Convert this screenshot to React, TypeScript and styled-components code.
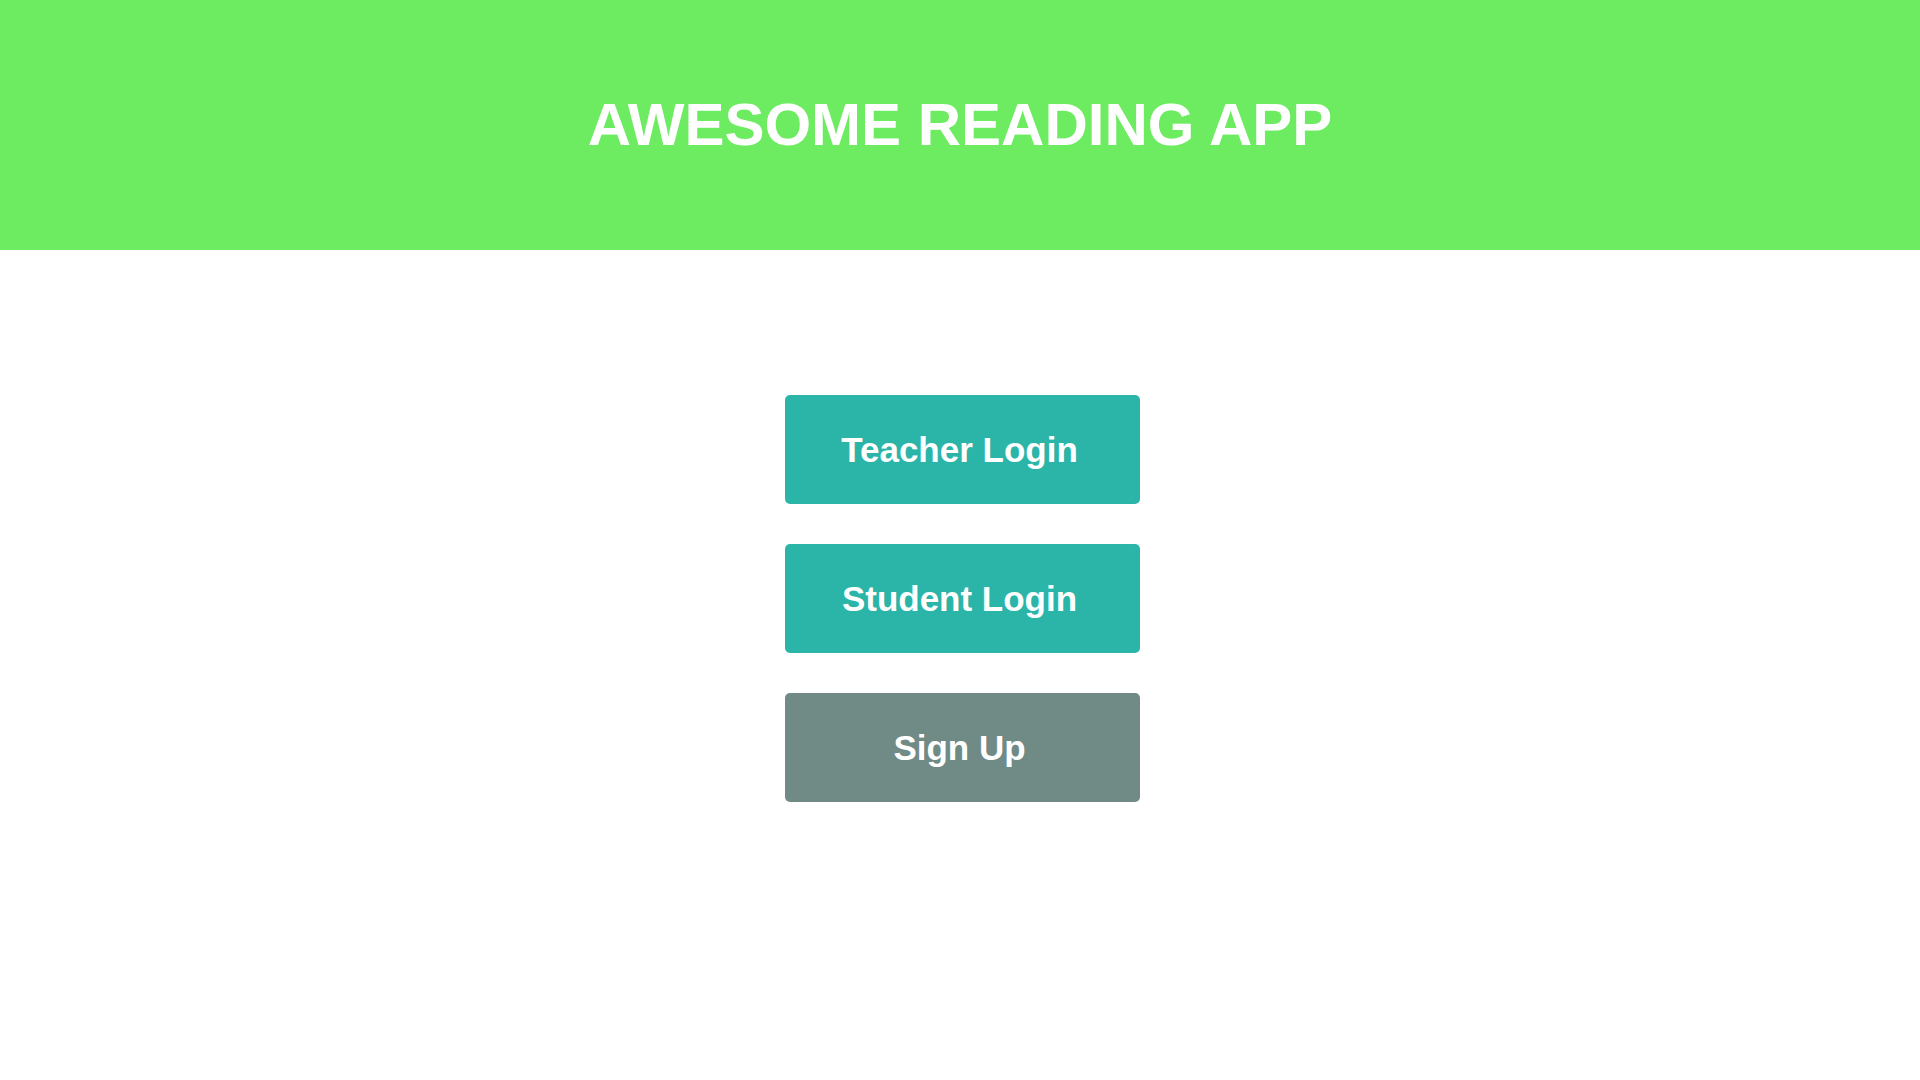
import React from 'react';
import styled, { createGlobalStyle } from 'styled-components';

const GlobalStyle = createGlobalStyle`
  html, body {
    margin: 0;
    padding: 0;
    background: #ffffff;
    font-family: 'Liberation Sans', Arial, sans-serif;
  }
`;

const Header = styled.header`
  box-sizing: border-box;
  height: 250px;
  padding-top: 90px;
  background: #6deb61;
  text-align: center;
`;

const Title = styled.h1`
  margin: 0;
  font-size: 60px;
  font-weight: 700;
  color: #ffffff;
`;

const Actions = styled.main`
  display: flex;
  flex-direction: column;
  align-items: center;
  gap: 40.5px;
  padding: 145px 0 0 5px;
`;

const Button = styled.button<{ $variant?: 'primary' | 'muted' }>`
  box-sizing: border-box;
  width: 355px;
  height: 108.5px;
  padding: 2px 6px 0 0;
  border: none;
  border-radius: 5px;
  background: ${(p) => (p.$variant === 'muted' ? '#708a85' : '#2bb5a8')};
  color: #ffffff;
  font-family: 'Liberation Sans', Arial, sans-serif;
  font-size: 35px;
  font-weight: 700;
  cursor: pointer;
`;

const App: React.FC = () => (
  <>
    <GlobalStyle />
    <Header>
      <Title>AWESOME READING APP</Title>
    </Header>
    <Actions>
      <Button>Teacher Login</Button>
      <Button>Student Login</Button>
      <Button $variant="muted">Sign Up</Button>
    </Actions>
  </>
);

export default App;
